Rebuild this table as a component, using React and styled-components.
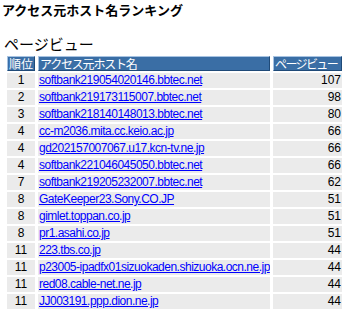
import * as React from 'react';
import styled, { createGlobalStyle } from 'styled-components';

const GlobalStyle = createGlobalStyle`
  html, body {
    margin: 0;
    padding: 0;
    background: #ffffff;
  }
  body {
    font-family: "Liberation Sans", "Noto Sans CJK JP", sans-serif;
    color: #000000;
  }
`;

const rows = [
  { rank: 1, host: 'softbank219054020146.bbtec.net', views: 107 },
  { rank: 2, host: 'softbank219173115007.bbtec.net', views: 98 },
  { rank: 3, host: 'softbank218140148013.bbtec.net', views: 80 },
  { rank: 4, host: 'cc-m2036.mita.cc.keio.ac.jp', views: 66 },
  { rank: 4, host: 'gd202157007067.u17.kcn-tv.ne.jp', views: 66 },
  { rank: 4, host: 'softbank221046045050.bbtec.net', views: 66 },
  { rank: 7, host: 'softbank219205232007.bbtec.net', views: 62 },
  { rank: 8, host: 'GateKeeper23.Sony.CO.JP', views: 51 },
  { rank: 8, host: 'gimlet.toppan.co.jp', views: 51 },
  { rank: 8, host: 'pr1.asahi.co.jp', views: 51 },
  { rank: 11, host: '223.tbs.co.jp', views: 44 },
  { rank: 11, host: 'p23005-ipadfx01sizuokaden.shizuoka.ocn.ne.jp', views: 44 },
  { rank: 11, host: 'red08.cable-net.ne.jp', views: 44 },
  { rank: 11, host: 'JJ003191.ppp.dion.ne.jp', views: 44 },
];

const Page = styled.div`
  padding: 2px 0 0 2px;
`;

const Title = styled.h1`
  margin: 0;
  font-family: "Noto Sans CJK JP", sans-serif;
  font-size: 13px;
  font-weight: bold;
  line-height: 16px;
`;

const Section = styled.h2`
  margin: 17px 0 0 2px;
  font-family: "Noto Sans CJK JP", sans-serif;
  font-size: 15px;
  font-weight: normal;
  line-height: 18px;
`;

const Table = styled.table`
  margin: 1px 0 0 2px;
  border-collapse: separate;
  border-spacing: 3px 2px;
  table-layout: fixed;
  width: 341px;
`;

const HeadCell = styled.th`
  width: ${props => props.$w}px;
  box-sizing: border-box;
  padding: 0 0 0 ${props => (props.$center ? 0 : 1)}px;
  background: #3a6ea5;
  border: 1px solid;
  border-color: #a7c3e2 #1f4a78 #1f4a78 #a7c3e2;
  color: #ffffff;
  font-family: "Noto Sans CJK JP", sans-serif;
  font-size: 12px;
  font-weight: normal;
  line-height: 13px;
  letter-spacing: ${props => props.$ls || 0}px;
  text-align: ${props => (props.$center ? 'center' : 'left')};
  white-space: nowrap;
  overflow: hidden;
`;

const Cell = styled.td`
  padding: 0 ${props => (props.$align === 'right' ? 1 : 0)}px 0
    ${props => (props.$align === 'left' ? 1 : 0)}px;
  background: #ebebeb;
  font-size: 12px;
  line-height: 15px;
  height: 15px;
  letter-spacing: ${props => (props.$align === 'left' ? -0.5 : 0)}px;
  text-align: ${props => props.$align};
  white-space: nowrap;
  overflow: hidden;
`;

const HostLink = styled.a`
  color: #0000ff;
  text-decoration: underline;
`;

export default function App() {
  return (
    <Page>
      <GlobalStyle />
      <Title>アクセス元ホスト名ランキング</Title>
      <Section>ページビュー</Section>
      <Table>
        <thead>
          <tr>
            <HeadCell $w={28} $center>順位</HeadCell>
            <HeadCell $w={232} $ls={-1.2}>アクセス元ホスト名</HeadCell>
            <HeadCell $w={69} $ls={-1.6}>ページビュー</HeadCell>
          </tr>
        </thead>
        <tbody>
          {rows.map((r, i) => (
            <tr key={i}>
              <Cell $align="center">{r.rank}</Cell>
              <Cell $align="left">
                <HostLink href="#">{r.host}</HostLink>
              </Cell>
              <Cell $align="right">{r.views}</Cell>
            </tr>
          ))}
        </tbody>
      </Table>
    </Page>
  );
}
